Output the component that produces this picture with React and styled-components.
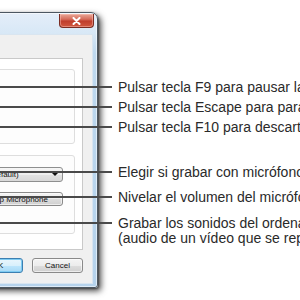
import React from "react";
import styled, { createGlobalStyle } from "styled-components";

const Global = createGlobalStyle`
  html, body { margin: 0; padding: 0; background: #ffffff; }
  body { font-family: "Liberation Sans", Arial, sans-serif; }
`;

const Page = styled.div`
  position: relative;
  width: 300px;
  height: 300px;
  overflow: hidden;
  background: #ffffff;
`;

const Window = styled.div`
  position: absolute;
  left: -102px;
  top: 12px;
  width: 200px;
  height: 276px;
  box-sizing: border-box;
  border: 1px solid #4c5761;
  border-radius: 7px 7px 3px 3px;
  background: linear-gradient(180deg, #e4eef9 0, #d8e8f6 20px, #bfd9ef 40px, #b6d3ec 100%);
  box-shadow: 3px 3px 6px rgba(0, 0, 0, 0.7), 1px 1px 2px rgba(0, 0, 0, 0.4),
    inset 0 0 0 1px rgba(255, 255, 255, 0.55);
  display: flex;
  flex-direction: column;
  padding: 0 4px 3px 4px;
`;

const TitleBar = styled.div`
  height: 21px;
  display: flex;
  justify-content: flex-end;
  align-items: flex-start;
`;

const CloseButton = styled.div`
  margin-top: 1px;
  margin-right: -1px;
  width: 35px;
  height: 14px;
  box-sizing: border-box;
  border: 1px solid #7a2c22;
  border-top: none;
  border-radius: 0 0 4px 4px;
  background: linear-gradient(180deg, #e9a898 0, #d66d5b 40%, #c03e2d 55%, #d0583f 100%);
  box-shadow: inset 0 0 0 1px rgba(255, 200, 190, 0.45);
  display: flex;
  align-items: center;
  justify-content: center;
`;

const Client = styled.div`
  flex: 1;
  box-sizing: border-box;
  background: #f0f0f0;
  border: 1px solid #d9e5f0;
  padding: 23px 9px 0 9px;
  display: flex;
  flex-direction: column;
`;

const Panel = styled.div`
  height: 192px;
  box-sizing: border-box;
  background: #ffffff;
  border: 1px solid #c9c9c9;
  padding: 10px 7px 0 7px;
  display: flex;
  flex-direction: column;
  gap: 11px;
`;

const GroupBox = styled.div`
  height: ${(p) => p.$h}px;
  box-sizing: border-box;
  border: 1px solid #dedede;
  border-radius: 3px;
  background: #fdfdfd;
  padding: 11px 11px 0 0;
  display: flex;
  flex-direction: column;
  align-items: flex-end;
  gap: 10px;
`;

const Dropdown = styled.div`
  width: 123px;
  height: 15px;
  box-sizing: border-box;
  border: 1px solid #8e8f8f;
  border-radius: 3px;
  background: linear-gradient(180deg, #f6f6f6 0, #eeeeee 50%, #e2e2e2 51%, #d8d8d8 100%);
  display: flex;
  align-items: center;
  padding: 0 4px 0 3px;
  font-size: 8px;
  color: #111;
`;

const DropText = styled.span`
  flex: 1;
  white-space: nowrap;
`;

const Arrow = styled.span`
  width: 0;
  height: 0;
  border-left: 3px solid transparent;
  border-right: 3px solid transparent;
  border-top: 3px solid #111;
`;

const Button = styled.div`
  width: ${(p) => p.$w}px;
  height: ${(p) => p.$h}px;
  box-sizing: border-box;
  border: 1px solid ${(p) => (p.$focus ? "#3c7fb1" : "#8a8a8a")};
  border-radius: 3px;
  background: ${(p) =>
    p.$focus
      ? "linear-gradient(180deg, #eaf6fd 0, #d9f0fc 50%, #bee6fd 51%, #a7d9f5 100%)"
      : "linear-gradient(180deg, #f4f4f4 0, #ececec 50%, #dddddd 51%, #d0d0d0 100%)"};
  box-shadow: ${(p) => (p.$focus ? "inset 0 0 0 1px #7ecbf2" : "inset 0 0 0 1px rgba(255,255,255,0.6)")};
  display: flex;
  align-items: center;
  justify-content: center;
  font-size: 8px;
  color: #111;
  white-space: nowrap;
`;

const ButtonRow = styled.div`
  margin-top: 8px;
  display: flex;
  justify-content: flex-end;
  gap: 9px;
`;

const Callouts = styled.div`
  position: absolute;
  left: 0;
  top: 0;
  width: 300px;
  display: flex;
  flex-direction: column;
  padding-top: 79.5px;
`;

const Callout = styled.div`
  margin-top: ${(p) => p.$mt}px;
  display: flex;
  align-items: flex-start;
`;

const Leader = styled.div`
  flex: none;
  width: 112px;
  height: 2px;
  margin-top: 6.5px;
  background: #4a4a4a;
`;

const Label = styled.div`
  margin-left: 6px;
  font-family: "Liberation Sans", Arial, sans-serif;
  font-size: 14px;
  line-height: 15px;
  color: #2a2a2a;
  white-space: nowrap;
`;

const notes = [
  { mt: 0, lines: ["Pulsar tecla F9 para pausar la grabación"] },
  { mt: 5, lines: ["Pulsar tecla Escape para parar la grabación"] },
  { mt: 5, lines: ["Pulsar tecla F10 para descartar la grabación"] },
  { mt: 30, lines: ["Elegir si grabar con micrófono o no"] },
  { mt: 10, lines: ["Nivelar el volumen del micrófono"] },
  { mt: 11, lines: ["Grabar los sonidos del ordenador", "(audio de un vídeo que se reproduce)"] },
];

export default function App() {
  return (
    <>
      <Global />
      <Page>
        <Window>
          <TitleBar>
            <CloseButton>
              <svg width="9" height="8" viewBox="0 0 9 8">
                <path d="M1.5 1 L7.5 7 M7.5 1 L1.5 7" stroke="#ffffff" strokeWidth="2" strokeLinecap="round" />
              </svg>
            </CloseButton>
          </TitleBar>
          <Client>
            <Panel>
              <GroupBox $h={75} />
              <GroupBox $h={79}>
                <Dropdown>
                  <DropText>Microphone (Default)</DropText>
                  <Arrow />
                </Dropdown>
                <Button $w={95} $h={14}>Setup Microphone</Button>
              </GroupBox>
            </Panel>
            <ButtonRow>
              <Button $w={51} $h={15} $focus>OK</Button>
              <Button $w={51} $h={15}>Cancel</Button>
            </ButtonRow>
          </Client>
        </Window>
        <Callouts>
          {notes.map((n, i) => (
            <Callout key={i} $mt={n.mt}>
              <Leader />
              <Label>
                {n.lines.map((l, j) => (
                  <div key={j}>{l}</div>
                ))}
              </Label>
            </Callout>
          ))}
        </Callouts>
      </Page>
    </>
  );
}
